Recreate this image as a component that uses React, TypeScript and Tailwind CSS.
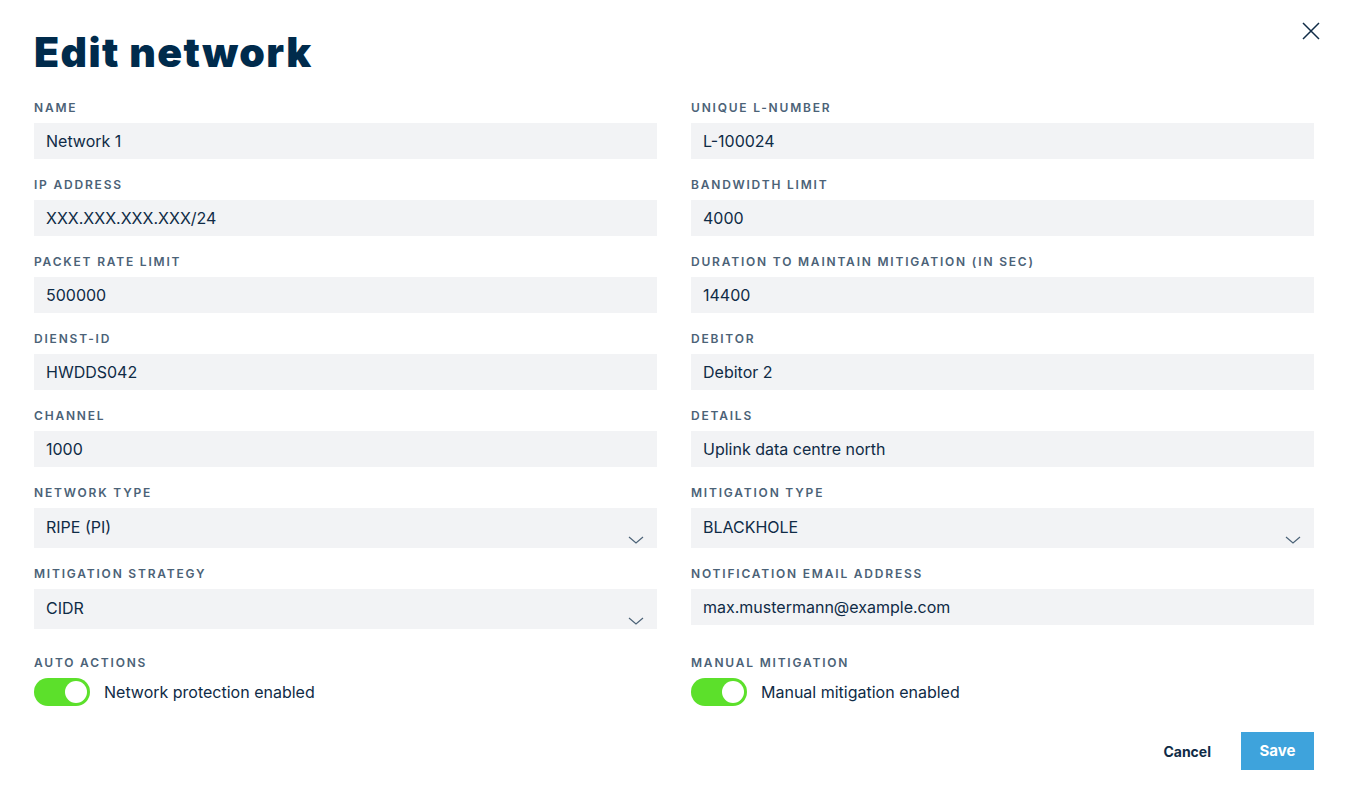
import { useState } from 'react';

type Field = { label: string; value: string; select?: boolean };

const leftFields: Field[] = [
  { label: 'Name', value: 'Network 1' },
  { label: 'IP address', value: 'XXX.XXX.XXX.XXX/24' },
  { label: 'Packet rate limit', value: '500000' },
  { label: 'Dienst-ID', value: 'HWDDS042' },
  { label: 'Channel', value: '1000' },
  { label: 'Network type', value: 'RIPE (PI)', select: true },
  { label: 'Mitigation strategy', value: 'CIDR', select: true },
];

const rightFields: Field[] = [
  { label: 'Unique L-Number', value: 'L-100024' },
  { label: 'Bandwidth limit', value: '4000' },
  { label: 'Duration to maintain mitigation (in sec)', value: '14400' },
  { label: 'Debitor', value: 'Debitor 2' },
  { label: 'Details', value: 'Uplink data centre north' },
  { label: 'Mitigation type', value: 'BLACKHOLE', select: true },
  { label: 'Notification email address', value: 'max.mustermann@example.com' },
];

const Label = ({ children }: { children: React.ReactNode }) => (
  <div className="h-[14px] mt-px mb-[8px] text-[12px] leading-[14px] font-semibold uppercase tracking-[1.8px] text-[#4b6277]">
    {children}
  </div>
);

const FieldBox = ({ field }: { field: Field }) => (
  <div>
    <Label>{field.label}</Label>
    {field.select ? (
      <div className="relative h-10 bg-[#f2f3f5] pl-3 pt-[9px] text-[16px] leading-5 text-[#0f2b46]">
        {field.value}
        <svg
          className="absolute right-[13px] bottom-[3px]"
          width="16"
          height="10"
          viewBox="0 0 16 10"
          fill="none"
          stroke="#4b6277"
          strokeWidth="1.2"
        >
          <path d="M1 2l7 6 7-6" />
        </svg>
      </div>
    ) : (
      <div className="h-9 bg-[#f2f3f5] pl-3 flex items-center text-[16px] text-[#0f2b46]">
        {field.value}
      </div>
    )}
  </div>
);

const Toggle = ({ on, onChange }: { on: boolean; onChange: () => void }) => (
  <button
    onClick={onChange}
    className={`relative w-14 h-7 rounded-full ${on ? 'bg-[#5ce02b]' : 'bg-gray-300'}`}
  >
    <span
      className={`absolute top-[3px] w-[22px] h-[22px] rounded-full bg-white ${on ? 'left-[31px]' : 'left-[3px]'}`}
    />
  </button>
);

export default function App() {
  const [autoActions, setAutoActions] = useState(true);
  const [manual, setManual] = useState(true);

  return (
    <div
      className="relative min-h-screen bg-white px-[34px] pt-7 text-[#0f2b46]"
      style={{ fontFamily: 'Inter, "Noto Sans", sans-serif' }}
    >
      <button className="absolute right-[28px] top-[22px] text-[#0f2b46]">
        <svg width="18" height="18" viewBox="0 0 18 18" stroke="currentColor" strokeWidth="1.5">
          <path d="M1 1l16 16M17 1L1 17" />
        </svg>
      </button>

      <h1 className="text-[41px] leading-[48px] font-black tracking-[1.4px] text-[#002b4c] mb-6">
        Edit network
      </h1>

      <div className="grid grid-cols-2 gap-x-[34px]">
        <div className="flex flex-col gap-[18px]">
          {leftFields.map((f) => (
            <FieldBox key={f.label} field={f} />
          ))}
        </div>
        <div className="flex flex-col gap-[18px]">
          {rightFields.map((f) => (
            <FieldBox key={f.label} field={f} />
          ))}
        </div>

        <div className="mt-[26px]">
          <Label>Auto actions</Label>
          <div className="flex items-center gap-[14px]">
            <Toggle on={autoActions} onChange={() => setAutoActions(!autoActions)} />
            <span className="text-[16px] text-[#0f2b46]">Network protection enabled</span>
          </div>
        </div>
        <div className="mt-[26px]">
          <Label>Manual mitigation</Label>
          <div className="flex items-center gap-[14px]">
            <Toggle on={manual} onChange={() => setManual(!manual)} />
            <span className="text-[16px] text-[#0f2b46]">Manual mitigation enabled</span>
          </div>
        </div>
      </div>

      <div className="flex justify-end items-center gap-[30px] mt-[26px]">
        <button className="text-[14px] font-bold text-[#0f2b46]">Cancel</button>
        <button className="w-[73px] h-[38px] bg-[#3ea3dc] text-white text-[15px] font-bold">
          Save
        </button>
      </div>
    </div>
  );
}
